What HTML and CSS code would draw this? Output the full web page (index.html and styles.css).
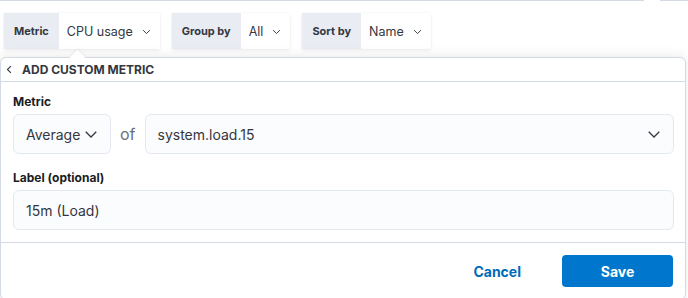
FILE: index.html
```html
<!DOCTYPE html>
<html lang="en">

<head>
    <meta charset="UTF-8">
    <meta name="viewport" content="width=device-width, initial-scale=1.0">
    <title>Add custom metric</title>
    <link rel="stylesheet" href="styles.css">
</head>

<body>
    <div class="topline">
        <div class="topline-left"></div>
        <div class="topline-right"></div>
    </div>

    <div class="filters">
        <div class="filter">
            <span class="filter-label">Metric</span>
            <button class="filter-button">CPU usage
                <svg class="chev-small" viewBox="0 0 16 16"><path d="M3 6l5 5 5-5" /></svg>
            </button>
        </div>
        <div class="filter">
            <span class="filter-label">Group by</span>
            <button class="filter-button">All
                <svg class="chev-small" viewBox="0 0 16 16"><path d="M3 6l5 5 5-5" /></svg>
            </button>
        </div>
        <div class="filter">
            <span class="filter-label">Sort by</span>
            <button class="filter-button">Name
                <svg class="chev-small" viewBox="0 0 16 16"><path d="M3 6l5 5 5-5" /></svg>
            </button>
        </div>
    </div>

    <div class="popover">
        <div class="arrow"></div>
        <div class="popover-title">
            <svg class="chev-back" viewBox="0 0 16 16"><path d="M10 3L5 8l5 5" /></svg>
            ADD CUSTOM METRIC
        </div>

        <div class="popover-body">
            <label class="field-label">Metric</label>
            <div class="metric-row">
                <div class="select select-agg">
                    <span>Average</span>
                    <svg class="chev" viewBox="0 0 16 16"><path d="M2 5.5l6 6 6-6" /></svg>
                </div>
                <span class="of">of</span>
                <div class="select select-field">
                    <span>system.load.15</span>
                    <svg class="chev" viewBox="0 0 16 16"><path d="M2 5.5l6 6 6-6" /></svg>
                </div>
            </div>

            <label class="field-label label-gap">Label (optional)</label>
            <input class="text-input" type="text" value="15m (Load)">
        </div>

        <div class="popover-footer">
            <button class="btn-cancel">Cancel</button>
            <button class="btn-save">Save</button>
        </div>
    </div>
</body>

</html>
```

FILE: styles.css
```css
body {
    margin: 0;
    font-family: Inter, "Noto Sans", Arial, sans-serif;
    color: #343741;
    background: #fff;
    overflow: hidden;
}

.topline {
    display: flex;
    gap: 16px;
    height: 1px;
}

.topline-left {
    flex: 1;
    background: #d3dae6;
}

.topline-right {
    width: 28px;
    background: #d3dae6;
}

.filters {
    display: flex;
    gap: 12px;
    padding: 12px 0 0 4px;
}

.filter {
    display: flex;
    height: 36px;
    box-shadow: 0 2px 4px rgba(0, 0, 0, 0.06), 0 0 2px rgba(0, 0, 0, 0.05);
}

.filter-label {
    display: flex;
    align-items: center;
    padding: 0 10px;
    background: #e9edf3;
    font-size: 11px;
    font-weight: 700;
    color: #343741;
}

.filter-button {
    display: flex;
    align-items: center;
    gap: 8px;
    padding: 0 8px;
    border: none;
    background: #fff;
    font-family: inherit;
    font-size: 12.5px;
    color: #343741;
}

.chev-small {
    width: 11px;
    height: 11px;
    fill: none;
    stroke: #343741;
    stroke-width: 1.4;
}

.popover {
    position: relative;
    width: 684px;
    margin-top: 8px;
    border: 1px solid #d3dae6;
    border-radius: 6px;
    background: #fff;
    box-shadow: 0 -4px 10px rgba(0, 0, 0, 0.05), 0 1px 4px rgba(0, 0, 0, 0.05);
}

.arrow {
    position: absolute;
    left: 71px;
    top: -6px;
    width: 11px;
    height: 11px;
    background: #fff;
    transform: rotate(45deg);
    box-shadow: -1px -1px 2px rgba(0, 0, 0, 0.05);
}

.popover-title {
    position: relative;
    display: flex;
    align-items: center;
    gap: 7px;
    height: 23px;
    padding-left: 3px;
    border-bottom: 1px solid #d3dae6;
    font-size: 12px;
    font-weight: 700;
    color: #343741;
}

.chev-back {
    width: 11px;
    height: 11px;
    fill: none;
    stroke: #343741;
    stroke-width: 1.6;
}

.popover-body {
    padding: 12px 11px 12px 12px;
    border-bottom: 1px solid #d3dae6;
}

.field-label {
    display: block;
    height: 16px;
    line-height: 16px;
    margin-bottom: 4px;
    font-size: 12px;
    font-weight: 700;
    color: #1a1c21;
}

.label-gap {
    margin-top: 16px;
}

.metric-row {
    display: flex;
    align-items: center;
    gap: 8px;
}

.select {
    display: flex;
    align-items: center;
    justify-content: space-between;
    box-sizing: border-box;
    height: 40px;
    padding: 0 12px;
    border: 1px solid #e3e8f0;
    border-radius: 6px;
    background: #fbfcfd;
    font-size: 14px;
    color: #343741;
}

.select-agg {
    width: 98px;
}

.select-field {
    flex: 1;
}

.chev {
    width: 14px;
    height: 14px;
    fill: none;
    stroke: #343741;
    stroke-width: 1.5;
}

.of {
    font-size: 16px;
    color: #69707d;
    padding: 0 1px;
}

.text-input {
    display: block;
    box-sizing: border-box;
    width: 100%;
    height: 40px;
    padding: 0 12px;
    border: 1px solid #e3e8f0;
    border-radius: 6px;
    background: #fbfcfd;
    font-family: inherit;
    font-size: 14px;
    color: #343741;
    outline: none;
}

.popover-footer {
    display: flex;
    justify-content: flex-end;
    align-items: center;
    gap: 29px;
    padding: 12px 12px 12px 12px;
}

.btn-cancel {
    height: 32px;
    padding: 0 12px;
    border: none;
    background: none;
    font-family: inherit;
    font-size: 14px;
    font-weight: 700;
    color: #006bb8;
}

.btn-save {
    width: 111px;
    height: 32px;
    border: none;
    border-radius: 4px;
    background: #0077cc;
    font-family: inherit;
    font-size: 14px;
    font-weight: 700;
    color: #fff;
}
```
